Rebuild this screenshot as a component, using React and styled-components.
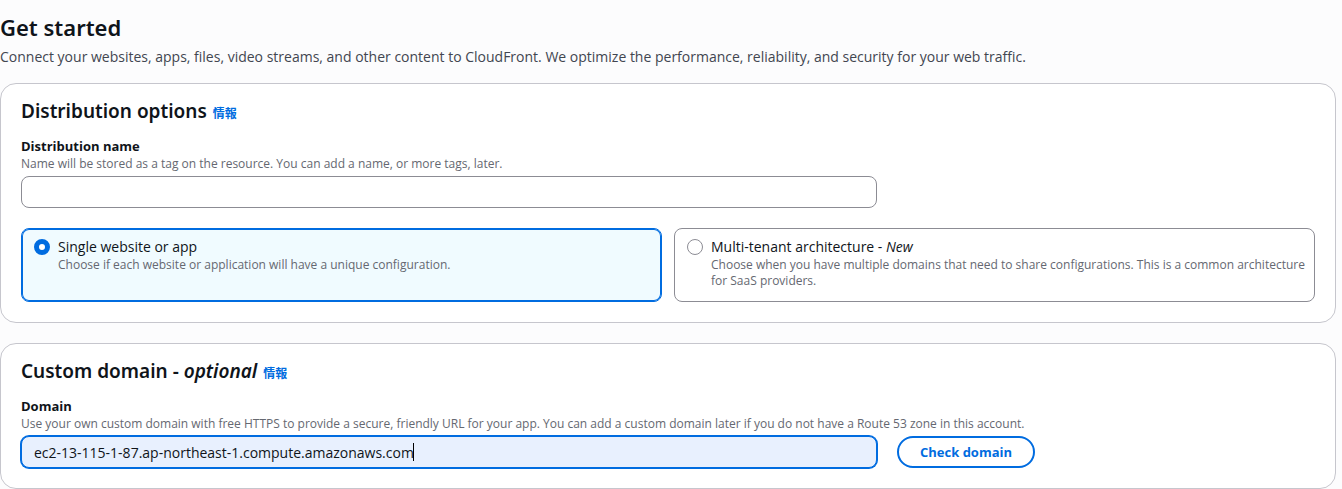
import React, { useEffect, useRef, useState } from "react";
import styled, { createGlobalStyle, css } from "styled-components";

const blue = "#006ce0";
const bodyFont = '"Open Sans", "Noto Sans", "Noto Sans CJK JP", sans-serif';
const headingFont = '"Noto Sans", "Open Sans", "Noto Sans CJK JP", sans-serif';

const GlobalStyle = createGlobalStyle`
  *, *::before, *::after { box-sizing: border-box; }
  body {
    margin: 0;
    background: #fcfcfd;
    color: #0f141a;
    font-family: ${bodyFont};
    font-size: 14px;
    line-height: 20px;
  }
`;

const Page = styled.main`
  padding: 12px 6px 0 0;
`;

const PageTitle = styled.h1`
  margin: 0;
  font-family: ${headingFont};
  font-size: 22px;
  line-height: 30px;
  font-weight: 600;
`;

const PageDescription = styled.p`
  margin: 5px 0 16px;
  font-size: 14px;
  color: #424650;
`;

const Stack = styled.div`
  display: flex;
  flex-direction: column;
  gap: 20px;
`;

const Card = styled.section`
  padding: 15px 20px 20px;
  border: 1px solid #c6c6cd;
  border-radius: 16px;
  background: #fff;
`;

const CardHeader = styled.header`
  display: flex;
  align-items: baseline;
  gap: 6px;
  margin-bottom: 13px;
`;

const CardTitle = styled.h2`
  margin: 0;
  font-family: ${headingFont};
  font-size: 19px;
  line-height: 24px;
  font-weight: 600;
`;

const InfoLink = styled.a`
  font-family: "Noto Sans CJK JP", sans-serif;
  font-size: 12px;
  line-height: 16px;
  font-weight: 700;
  color: ${blue};
  text-decoration: none;
`;

const FieldLabel = styled.label`
  display: block;
  font-size: 13px;
  font-weight: 700;
`;

const Hint = styled.span`
  display: block;
  font-size: 12px;
  line-height: 16px;
  color: #656871;
`;

const FieldRow = styled.div`
  display: grid;
  grid-template-columns: repeat(12, 1fr);
  gap: 20px;
  margin-top: 4px;
`;

const InputWrap = styled.div`
  position: relative;
  grid-column: span 8;
  display: flex;
`;

const TextInput = styled.input`
  width: 100%;
  height: 32px;
  padding: 0 12px;
  border: 1px solid #8c8c94;
  border-radius: 8px;
  outline: none;
  background: #fff;
  color: #0f141a;
  font: inherit;
  font-size: 14px;
  ${(p) =>
    p.$active &&
    css`
      border-color: ${blue};
      box-shadow: 0 0 0 1px ${blue};
      background: #e8f0fe;
      caret-color: transparent;
    `}
`;

const Caret = styled.span`
  position: absolute;
  top: 7px;
  width: 1px;
  height: 18px;
  background: #000;
  pointer-events: none;
`;

const ButtonCell = styled.div`
  grid-column: span 4;
`;

const CheckButton = styled.button`
  height: 32px;
  padding: 0 21px;
  border: 2px solid ${blue};
  border-radius: 20px;
  background: #fff;
  color: ${blue};
  font: inherit;
  font-size: 13px;
  font-weight: 700;
  white-space: nowrap;
`;

const Tiles = styled.div`
  display: grid;
  grid-template-columns: 1fr 1fr;
  gap: 12px;
  margin-top: 20px;
`;

const Tile = styled.label`
  display: flex;
  gap: 8px;
  padding: 8px 4px 12px 12px;
  border: 1px solid #8c8c94;
  border-radius: 8px;
  ${(p) =>
    p.$selected &&
    css`
      border-color: ${blue};
      box-shadow: inset 0 0 0 1px ${blue};
      background: #f0fbff;
    `}
`;

const Radio = styled.input`
  appearance: none;
  flex: none;
  width: 16px;
  height: 16px;
  margin: 2px 0 0;
  border: 1px solid #8c8c94;
  border-radius: 50%;
  background: #fff;
  &:checked {
    border: 5px solid ${blue};
  }
`;

const TileTitle = styled.span`
  display: block;
  font-size: 14px;
`;

function TileOption({ value, selected, onSelect, title, children }) {
  return (
    <Tile $selected={selected}>
      <Radio
        type="radio"
        name="distribution-type"
        value={value}
        checked={selected}
        onChange={() => onSelect(value)}
      />
      <span>
        <TileTitle>{title}</TileTitle>
        <Hint>{children}</Hint>
      </span>
    </Tile>
  );
}

/* Text box with a steady caret drawn at the insertion point. */
function ActiveInput({ value, onChange, ...rest }) {
  const ref = useRef(null);
  const [caretX, setCaretX] = useState(0);

  const placeCaret = () => {
    const el = ref.current;
    const style = getComputedStyle(el);
    const ctx = document.createElement("canvas").getContext("2d");
    ctx.font = `${style.fontWeight} ${style.fontSize} ${style.fontFamily}`;
    const before = el.value.slice(0, el.selectionEnd);
    const start = parseFloat(style.paddingLeft) + parseFloat(style.borderLeftWidth);
    setCaretX(Math.round(start + ctx.measureText(before).width - el.scrollLeft) - 1);
  };

  useEffect(() => {
    const el = ref.current;
    el.focus({ preventScroll: true });
    el.setSelectionRange(el.value.length, el.value.length);
    placeCaret();
  }, []);

  return (
    <InputWrap>
      <TextInput
        {...rest}
        $active
        ref={ref}
        value={value}
        onChange={onChange}
        onSelect={placeCaret}
      />
      <Caret aria-hidden="true" style={{ left: caretX }} />
    </InputWrap>
  );
}

export default function App() {
  const [type, setType] = useState("single");
  const [name, setName] = useState("");
  const [domain, setDomain] = useState("ec2-13-115-1-87.ap-northeast-1.compute.amazonaws.com");

  return (
    <>
      <GlobalStyle />
      <Page>
        <PageTitle>Get started</PageTitle>
        <PageDescription>
          Connect your websites, apps, files, video streams, and other content to CloudFront. We
          optimize the performance, reliability, and security for your web traffic.
        </PageDescription>
        <Stack>
          <Card>
            <CardHeader>
              <CardTitle>Distribution options</CardTitle>
              <InfoLink href="#info">情報</InfoLink>
            </CardHeader>
            <FieldLabel htmlFor="name">Distribution name</FieldLabel>
            <Hint id="name-hint">
              Name will be stored as a tag on the resource. You can add a name, or more tags, later.
            </Hint>
            <FieldRow>
              <InputWrap>
                <TextInput
                  id="name"
                  aria-describedby="name-hint"
                  value={name}
                  onChange={(e) => setName(e.target.value)}
                />
              </InputWrap>
            </FieldRow>
            <Tiles role="radiogroup">
              <TileOption
                value="single"
                selected={type === "single"}
                onSelect={setType}
                title="Single website or app"
              >
                Choose if each website or application will have a unique configuration.
              </TileOption>
              <TileOption
                value="multi"
                selected={type === "multi"}
                onSelect={setType}
                title={
                  <>
                    Multi-tenant architecture - <em>New</em>
                  </>
                }
              >
                Choose when you have multiple domains that need to share configurations. This is a
                common architecture for SaaS providers.
              </TileOption>
            </Tiles>
          </Card>
          <Card>
            <CardHeader>
              <CardTitle>
                Custom domain - <em>optional</em>
              </CardTitle>
              <InfoLink href="#info">情報</InfoLink>
            </CardHeader>
            <FieldLabel htmlFor="domain">Domain</FieldLabel>
            <Hint id="domain-hint">
              Use your own custom domain with free HTTPS to provide a secure, friendly URL for your
              app. You can add a custom domain later if you do not have a Route 53 zone in this
              account.
            </Hint>
            <FieldRow>
              <ActiveInput
                id="domain"
                aria-describedby="domain-hint"
                value={domain}
                onChange={(e) => setDomain(e.target.value)}
              />
              <ButtonCell>
                <CheckButton type="button">Check domain</CheckButton>
              </ButtonCell>
            </FieldRow>
          </Card>
        </Stack>
      </Page>
    </>
  );
}
